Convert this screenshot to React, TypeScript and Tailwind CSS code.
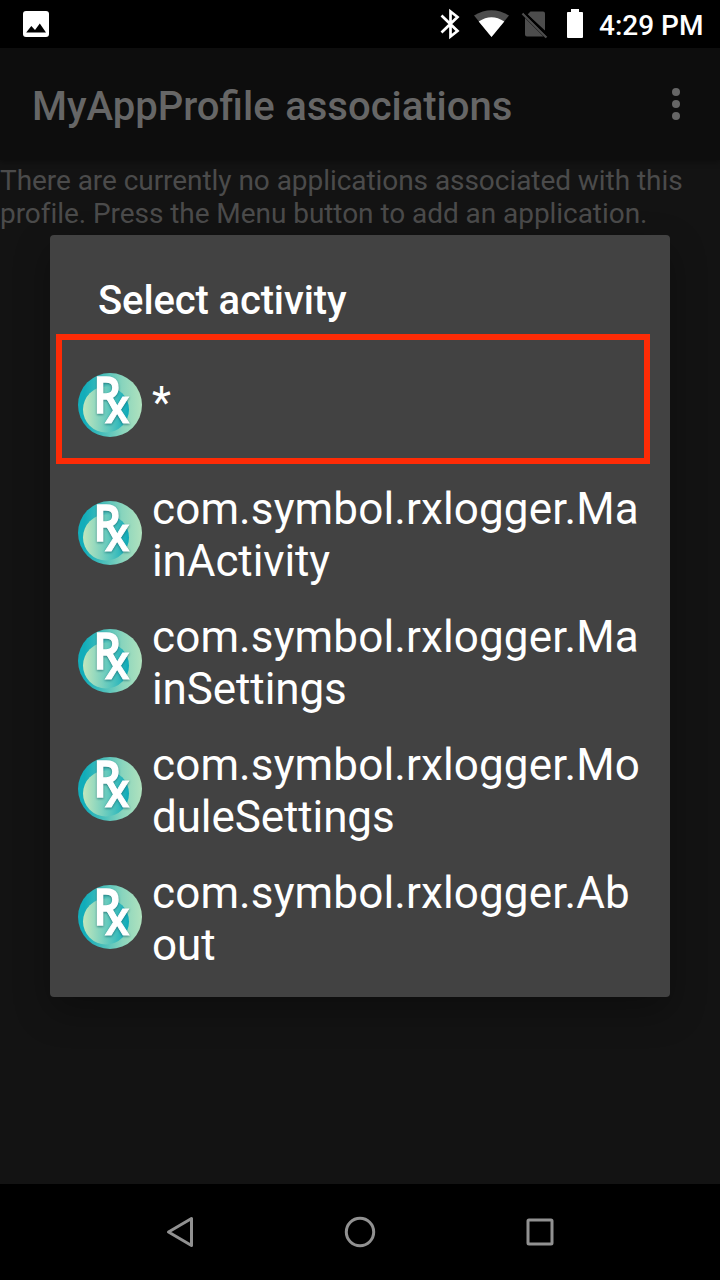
function RxIcon() {
  return (
    <svg className="h-16 w-16 shrink-0 overflow-visible" viewBox="0 0 64 64">
      <defs>
        <linearGradient id="outer">
          <stop offset="0.1" stopColor="#12adba" />
          <stop offset="0.4" stopColor="#4abfbb" />
          <stop offset="0.7" stopColor="#8ad5bd" />
          <stop offset="1" stopColor="#b0e2be" />
        </linearGradient>
        <linearGradient id="inner">
          <stop offset="0" stopColor="#c2e7bd" />
          <stop offset="0.3" stopColor="#8fd7be" />
          <stop offset="0.65" stopColor="#4fc3bd" />
          <stop offset="1" stopColor="#0ba9b9" />
        </linearGradient>
      </defs>
      <circle cx="32" cy="32" r="32" fill="url(#outer)" />
      <circle cx="28" cy="36.5" r="23" fill="url(#inner)" />
      <g
        className="font-['Open_Sans'] font-semibold drop-shadow-[0_1px_1px_rgba(0,80,90,0.6)]"
        fill="#fff"
        stroke="#fff"
      >
        <text transform="translate(15.6 39.6) scale(.84 1)" fontSize="51.5" strokeWidth="1.6">
          R
        </text>
        <text transform="translate(26.8 49.6) scale(.97 1)" fontSize="46.5" strokeWidth="0.9">
          x
        </text>
      </g>
    </svg>
  );
}

const activities = [
  ["com.symbol.rxlogger.Ma", "inActivity"],
  ["com.symbol.rxlogger.Ma", "inSettings"],
  ["com.symbol.rxlogger.Mo", "duleSettings"],
  ["com.symbol.rxlogger.Ab", "out"],
];

export default function App() {
  return (
    <div className="relative flex h-[1280px] w-[720px] flex-col overflow-hidden bg-[#131313] font-[Roboto,sans-serif]">
      <header className="flex h-12 shrink-0 items-center bg-black pr-4 pl-[23px] text-white">
        <svg className="h-[26px] w-[26px]" viewBox="0 0 26 26">
          <rect width="26" height="26" rx="3" fill="#fff" />
          <path d="M3.2 21.5 L8.3 15 L12 19 L16.8 12.5 L23 21.5Z" fill="#000" />
        </svg>
        <div className="ml-auto flex items-center">
          <svg className="h-12 w-[150px]" viewBox="0 0 150 48">
            <path d="M1.5 15.5 L17.5 31 L10.5 36.5 V11.5 L17.5 17 L1.5 32.5" fill="none" stroke="#fff" strokeWidth="2.7" />
            <path d="M34 15.5 Q51.5 5 69 15.5 L51.5 37Z" fill="#4d4d4d" />
            <path d="M38.7 21.5 Q51.5 13 64.3 21.5 L51.5 37Z" fill="#fff" />
            <path d="M90.5 11.5 H103 Q105 11.5 105 13.5 V30.5 L87.5 14.5Z M85 18 L103.5 36.5 H87 Q85 36.5 85 34.5Z" fill="#4d4d4d" />
            <path d="M82.5 13.5 L106.5 37.5" stroke="#4d4d4d" strokeWidth="2.4" />
            <path d="M84.5 12.5 L108 36" stroke="#000" strokeWidth="1.8" />
            <path d="M131 9 h8 v3 h3.2 q0.8 0 .8 1 V37 q0 1 -1 1 H128 q-1 0 -1 -1 V13 q0 -1 .8 -1 H131Z" fill="#fff" />
          </svg>
          <span className="ml-[9px] w-[105px] pt-[3px] text-[28px] leading-8 font-medium whitespace-nowrap">4:29 PM</span>
        </div>
      </header>
      <div className="flex h-28 shrink-0 items-center justify-between bg-[#0d0d0d] pr-10 pl-8 shadow-[0_2px_6px_rgba(0,0,0,0.35)]">
        <h1 className="pt-1 text-[40px] leading-[47px] font-medium text-[#666] [word-spacing:0.7px]">
          MyAppProfile associations
        </h1>
        <div className="flex flex-col gap-1">
          <i className="h-2 w-2 rounded-full bg-[#666]" />
          <i className="h-2 w-2 rounded-full bg-[#666]" />
          <i className="h-2 w-2 rounded-full bg-[#666]" />
        </div>
      </div>
      <main className="flex-1 pt-1 text-[28px] leading-[33px] tracking-[-0.055px] whitespace-nowrap text-[#4b4b4b]">
        <p>There are currently no applications associated with this</p>
        <p>profile. Press the Menu button to add an application.</p>
      </main>
      <nav className="flex h-24 shrink-0 items-center justify-around bg-black px-[90px]">
        <svg className="h-12 w-12" viewBox="0 0 48 48" fill="none" stroke="#919191" strokeWidth="3" strokeLinejoin="round">
          <path d="M35.5 10.5 V37.5 L12.5 24 Z" />
        </svg>
        <svg className="h-12 w-12" viewBox="0 0 48 48" fill="none" stroke="#919191" strokeWidth="3">
          <circle cx="24" cy="24" r="13.7" />
        </svg>
        <svg className="h-12 w-12" viewBox="0 0 48 48" fill="none" stroke="#919191" strokeWidth="3">
          <rect x="12" y="12" width="24" height="24" rx="1" />
        </svg>
      </nav>
      <section
        role="dialog"
        className="absolute top-[235px] left-[50px] flex h-[762px] w-[620px] flex-col rounded bg-[#424242] text-white shadow-[0_14px_36px_rgba(0,0,0,0.3)]"
      >
        <h2 className="pt-[42px] pl-12 text-[40px] leading-[47px] font-medium tracking-[-0.13px]">Select activity</h2>
        <ul className="mt-[10px] flex flex-col">
          <li className="mb-[5px] ml-[6px] flex h-[130px] w-[594px] items-center border-[6px] border-[#fe2b06] pt-[11px] pl-4 text-[44px] leading-[52px]">
            <RxIcon />
            <span className="mb-1 ml-[10px]">*</span>
          </li>
          {activities.map(([first, second]) => (
            <li key={second} className="flex h-32 items-center pl-7 text-[44px] leading-[52px]">
              <RxIcon />
              <span className="mt-1 ml-[10px] whitespace-nowrap">
                <span className="tracking-[0.13px]">{first}</span>
                <br />
                <span className="tracking-[-0.1px]">{second}</span>
              </span>
            </li>
          ))}
        </ul>
      </section>
    </div>
  );
}
